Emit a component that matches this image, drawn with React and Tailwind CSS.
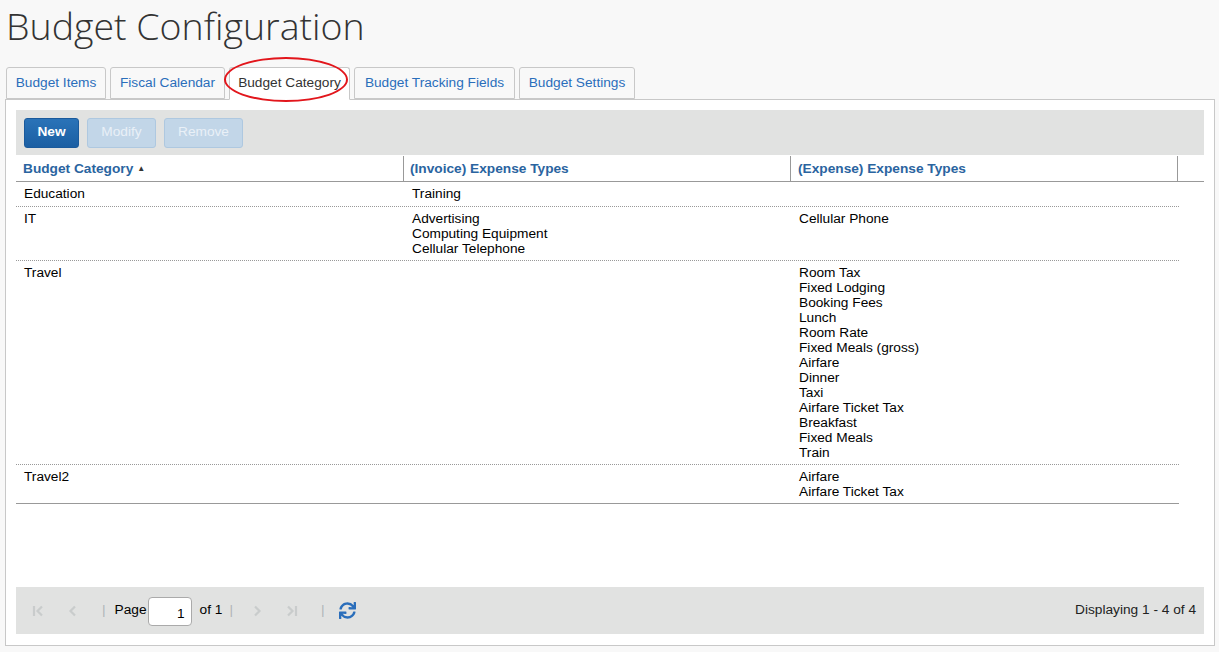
import { FaSync } from "react-icons/fa"

const rows = [
  { cat: "Education", inv: ["Training"], exp: [] },
  { cat: "IT", inv: ["Advertising", "Computing Equipment", "Cellular Telephone"], exp: ["Cellular Phone"] },
  {
    cat: "Travel",
    inv: [],
    exp: [
      "Room Tax",
      "Fixed Lodging",
      "Booking Fees",
      "Lunch",
      "Room Rate",
      "Fixed Meals (gross)",
      "Airfare",
      "Dinner",
      "Taxi",
      "Airfare Ticket Tax",
      "Breakfast",
      "Fixed Meals",
      "Train",
    ],
  },
  { cat: "Travel2", inv: [], exp: ["Airfare", "Airfare Ticket Tax"] },
]

const tabs = [
  { label: "Budget Items", w: "w-[100px]" },
  { label: "Fiscal Calendar", w: "w-[115px]" },
  { label: "Budget Category", w: "w-[121px]" },
  { label: "Budget Tracking Fields", w: "w-[161px]" },
  { label: "Budget Settings", w: "w-[116px]" },
]

function PagerIcon({ kind }) {
  return (
    <svg width="14" height="14" viewBox="0 0 14 14" fill="none" stroke="#c9cccc" strokeWidth="2.2">
      {kind === "first" && (
        <>
          <path d="M3 2v10" />
          <path d="M11 2.5L6.5 7l4.5 4.5" />
        </>
      )}
      {kind === "prev" && <path d="M9 2.5L4.5 7 9 11.5" />}
      {kind === "next" && <path d="M5 2.5L9.5 7 5 11.5" />}
      {kind === "last" && (
        <>
          <path d="M3 2.5L7.5 7 3 11.5" />
          <path d="M11 2v10" />
        </>
      )}
    </svg>
  )
}

export default function App() {
  return (
    <div className="min-h-screen bg-[#f8f8f8] font-['Liberation_Sans',Arial,sans-serif] text-[13.7px] text-black">
      <h1 className="pl-[6px] pt-[2px] h-[67px] font-['Open_Sans',sans-serif] font-light text-[37.5px] leading-[48px] text-[#333]">
        Budget Configuration
      </h1>

      {/* Tabs */}
      <div className="relative flex gap-[4px] pl-[6px] h-[32px] items-end">
        {tabs.map((t) => (
          <div
            key={t.label}
            className={`${t.w} h-[32px] flex items-center justify-center border border-[#c8c8c8] rounded-t-[3px] ${
              t.label === "Budget Category"
                ? "bg-white text-[#333] border-b-white relative z-10 h-[33px] -mb-[1px]"
                : "bg-[#f8f8f8] text-[#2a6ebb]"
            }`}
          >
            {t.label}
          </div>
        ))}
        <div className="absolute left-[224px] top-[-10px] w-[124px] h-[45px] rounded-[50%] border-2 border-[#e2161c] z-20" />
      </div>

      {/* Panel */}
      <div className="ml-[5px] w-[1210px] h-[547px] bg-white border border-[#c8c8c8] px-[10px] pt-[10px] pb-[11px] flex flex-col">
        <div className="h-[45px] bg-[#e1e2e1] flex items-center gap-[8px] px-[8px] shrink-0">
          <button className="h-[30px] w-[55px] rounded-[3px] bg-gradient-to-b from-[#2a73b8] to-[#1b5fa3] border border-[#1a5a9c] text-white font-bold">
            New
          </button>
          <button className="h-[30px] w-[69px] rounded-[3px] bg-[#c2d6e8] border border-[#aec8e0] text-[#e9f0f7]">
            Modify
          </button>
          <button className="h-[30px] w-[79px] rounded-[3px] bg-[#c2d6e8] border border-[#aec8e0] text-[#e9f0f7]">
            Remove
          </button>
        </div>

        <div className="flex-1">
          {/* header */}
          <div className="flex h-[27px] border-b border-[#999]">
            <div className="w-[388px] pl-[7px] flex items-center font-bold text-[#2a64a0] border-r border-[#999] mt-[1px] pt-[1px]">
              Budget Category
              <span className="ml-[4px] text-[8px] text-[#333]">▲</span>
            </div>
            <div className="w-[387px] pl-[6px] flex items-center font-bold text-[#2a64a0] border-r border-[#999] mt-[1px] pt-[1px]">
              (Invoice) Expense Types
            </div>
            <div className="w-[387px] pl-[7px] flex items-center font-bold text-[#2a64a0] border-r border-[#999] mt-[1px] pt-[1px]">
              (Expense) Expense Types
            </div>
            <div className="flex-1" />
          </div>

          {rows.map((r, i) => (
            <div
              key={r.cat}
              className={`w-[1163px] flex leading-[15px] pt-[4px] ${i === 0 ? "pb-[5px]" : "pb-[4px]"} ${
                i === rows.length - 1 ? "border-b border-[#999]" : "border-b border-dotted border-[#999]"
              }`}
            >
              <div className="w-[388px] pl-[8px]">{r.cat}</div>
              <div className="w-[387px] pl-[8px]">
                {r.inv.map((x) => (
                  <div key={x}>{x}</div>
                ))}
              </div>
              <div className="w-[387px] pl-[8px]">
                {r.exp.map((x) => (
                  <div key={x}>{x}</div>
                ))}
              </div>
            </div>
          ))}
        </div>

        {/* Pager */}
        <div className="h-[47px] bg-[#e1e2e1] flex items-center pl-[4px] pr-[8px] shrink-0">
          <div className="w-[35px] flex justify-center"><PagerIcon kind="first" /></div>
          <div className="w-[35px] flex justify-center"><PagerIcon kind="prev" /></div>
          <span className="text-[#b0b4b8] ml-[12px]">|</span>
          <span className="ml-[9px]">Page</span>
          <input
            readOnly
            value="1"
            className="ml-[1px] w-[44px] h-[29px] mt-[2px] bg-white border border-[#aaa] rounded-[4px] text-right pr-[6px] pt-[4px] outline-none"
          />
          <span className="ml-[8px]">of 1</span>
          <span className="text-[#b0b4b8] ml-[7px]">|</span>
          <div className="w-[35px] ml-[7px] flex justify-center"><PagerIcon kind="next" /></div>
          <div className="w-[35px] flex justify-center"><PagerIcon kind="last" /></div>
          <span className="text-[#b0b4b8] ml-[11px]">|</span>
          <FaSync className="ml-[14px] text-[#2a6ebb]" size={17} />
          <div className="flex-1" />
          <span className="text-[#222]">Displaying 1 - 4 of 4</span>
        </div>
      </div>
    </div>
  )
}
